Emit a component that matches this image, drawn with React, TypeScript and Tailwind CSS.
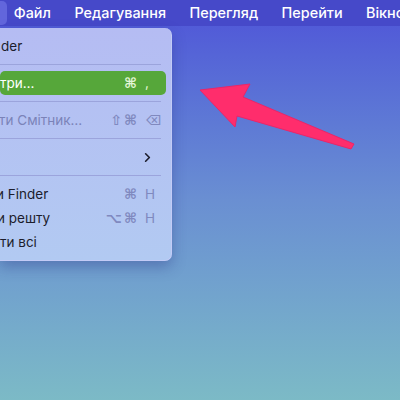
import { ChevronRight } from 'lucide-react';

const font = { fontFamily: 'Inter, "Noto Sans", "DejaVu Sans", sans-serif' };
const glyphs = { fontFamily: '"DejaVu Sans", Inter, sans-serif' };

function Separator() {
  return (
    <div className="h-[13px] flex items-center pr-[10px]">
      <div className="h-px w-full bg-[#9ba4dc]" />
    </div>
  );
}

// modifiers end near x=137, key column 138–155
function Shortcut({ mods, keyName, tone }: { mods: string[]; keyName: string; tone: string }) {
  return (
    <div className={`flex items-center text-[14px] font-bold ${tone}`} style={glyphs}>
      <div className="flex gap-[2px] justify-end">
        {mods.map((m) => (
          <span key={m}>{m}</span>
        ))}
      </div>
      <span className="w-[19px] pl-[8px] text-[13.5px] font-normal" style={font}>
        {keyName}
      </span>
    </div>
  );
}

function Item({
  label,
  shift = 0,
  mods,
  keyName,
  disabled,
  active,
  submenu,
}: {
  label: string;
  shift?: number;
  mods?: string[];
  keyName?: string;
  disabled?: boolean;
  active?: boolean;
  submenu?: boolean;
}) {
  const tone = active ? 'text-[#e4f5d8]' : 'text-[#8089bf]';
  return (
    <div
      className={`h-[24px] mr-[5px] rounded-[5px] flex items-center justify-between pr-[10px] text-[13.5px] ${
        active ? 'bg-[#56a73a] text-white' : disabled ? 'text-[#7b83b8]' : 'text-[#1c1d2c]'
      }`}
    >
      <span className="whitespace-nowrap" style={{ marginLeft: shift }}>
        {label}
      </span>
      {submenu ? (
        <ChevronRight size={15} strokeWidth={2.6} className="text-[#1c1d2c] mr-[1px]" />
      ) : mods ? (
        <Shortcut mods={mods} keyName={keyName ?? ''} tone={tone} />
      ) : null}
    </div>
  );
}

export default function App() {
  return (
    <div
      className="relative w-[400px] h-[400px] overflow-hidden bg-gradient-to-b from-[#4f52d8] via-[#6a8fd2] to-[#7cbac6]"
      style={font}
    >
      {/* Menu bar */}
      <div className="h-[26px] bg-[#4649c9] flex items-center text-white text-[14.4px] font-medium gap-[23.5px] whitespace-nowrap">
        <span className="-ml-[53px] w-[60px] h-[24px] rounded-[5px] bg-[#6266dc] flex items-center px-2">Finder</span>
        <span className="-ml-[16.5px]">Файл</span>
        <span>Редагування</span>
        <span>Перегляд</span>
        <span>Перейти</span>
        <span>Вікно</span>
      </div>

      {/* Finder menu, left part runs off the screen */}
      <div className="absolute top-[28px] left-0 w-[172px] pt-[6px] pb-[6px] rounded-r-[7px] bg-gradient-to-b from-[#b5bcf3] to-[#b2caf2] shadow-[0_6px_14px_rgba(40,50,130,0.35)] border-r border-b border-[#c3cbf6]">
        <Item label="der" shift={1} />
        <Separator />
        <Item label="три…" active mods={['⌘']} keyName="," />
        <Separator />
        <Item label="ти Смітник…" shift={-1} disabled mods={['⇧', '⌘']} keyName="⌫" />
        <Separator />
        <Item label="" submenu />
        <Separator />
        <Item label="и Finder" shift={-4} mods={['⌘']} keyName="H" />
        <Item label="и решту" shift={-3} mods={['⌥', '⌘']} keyName="H" />
        <Item label="ти всі" shift={0} />
      </div>

      {/* Arrow */}
      <svg className="absolute left-0 top-0" width="400" height="400" viewBox="0 0 400 400">
        <polygon
          points="200,90 250,84 243,97 354,144 351,149 237,116 235,127"
          fill="#ff2d6c"
          stroke="#e8266a"
          strokeWidth="1"
          strokeLinejoin="round"
        />
      </svg>
    </div>
  );
}
